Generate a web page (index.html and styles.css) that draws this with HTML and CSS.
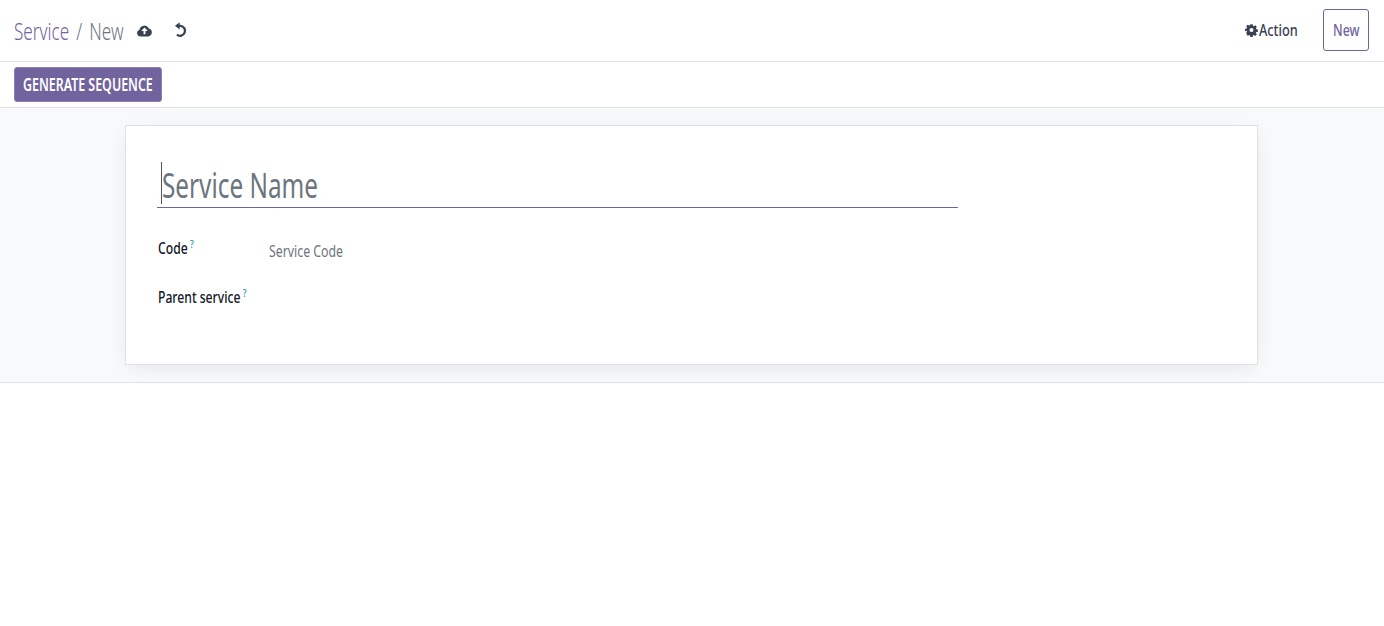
FILE: index.html
```html
<!DOCTYPE html>
<html lang="en">
<head>
<meta charset="utf-8">
<title>Service / New</title>
<link rel="stylesheet" href="styles.css">
</head>
<body>
<header class="control-panel">
  <div class="cp-left">
    <div class="breadcrumb"><span class="squeeze"><span class="crumb-link">Service</span> <span class="crumb-sep">/ New</span></span></div>
    <button class="icon-btn save" aria-label="Save">
      <svg viewBox="0 0 16 14" width="15" height="14"><path fill="#374151" fill-rule="evenodd" d="M3.800 13.800A3.700 3.700 0 0 1 2.600 6.600 5.300 5.300 0 0 1 12.600 5.400 4.300 4.300 0 0 1 12.200 13.800H3.800ZM8 4.200 4.400 8H7v3.400h2V8h2.600L8 4.200Z"/></svg>
    </button>
    <button class="icon-btn undo" aria-label="Discard">
      <svg viewBox="0 0 13 16" width="13" height="16"><path fill="none" stroke="#374151" stroke-width="2.300" d="M4.500 3.800H6.500a5 5 0 1 1-3.600 8.900"/><path fill="#374151" d="M1 3.800 5.600.2v7.200Z"/></svg>
    </button>
  </div>
  <div class="cp-right">
    <button class="action"><svg viewBox="-1 -1 18 18" width="13" height="14"><path fill="#374151" fill-rule="evenodd" d="M6.400 0h3.200l.4 2.200 1.300.6 1.900-1.300 2.200 2.200-1.300 1.900.6 1.300 2.200.4v3.200l-2.200.4-.6 1.300 1.300 1.900-2.200 2.200-1.900-1.300-1.300.6-.4 2.200H6.400l-.4-2.200-1.300-.6-1.900 1.300L.6 12.200l1.300-1.900-.6-1.300L-.9 9.600V6.400l2.200-.4.6-1.300L.6 2.800l2.200-2.200 1.900 1.300 1.300-.6L6.400 0ZM8 5.200a2.800 2.800 0 1 0 0 5.600 2.800 2.800 0 0 0 0-5.600Z"/></svg><span class="action-label"><span class="squeeze">Action</span></span></button>
    <button class="new-btn"><span class="squeeze">New</span></button>
  </div>
</header>
<div class="status-bar">
  <button class="primary-btn"><span class="squeeze">GENERATE SEQUENCE</span></button>
</div>
<main class="form-area">
  <section class="sheet">
    <div class="title-field"><span class="caret"></span><span class="squeeze title-placeholder">Service Name</span></div>
    <div class="field-grid">
      <div class="label"><span class="squeeze">Code<sup class="help">?</sup></span></div>
      <div class="value placeholder"><span class="squeeze">Service Code</span></div>
      <div class="label"><span class="squeeze">Parent service<sup class="help">?</sup></span></div>
      <div class="value"></div>
    </div>
  </section>
</main>
</body>
</html>
```

FILE: styles.css
```css
* { box-sizing: border-box; }
html, body { margin: 0; padding: 0; background: #fff; }
body { font-family: "Noto Sans", "Open Sans", sans-serif; color: #111827; height: 626px; overflow: hidden; }
button { font: inherit; background: none; border: 0; padding: 0; cursor: pointer; }

/* The reference text is horizontally condensed */
.squeeze { display: inline-block; white-space: nowrap; transform: scaleX(.77); transform-origin: left center; }

.control-panel { height: 62px; display: flex; justify-content: space-between; align-items: center; padding: 0 15px 2px 14px; border-bottom: 1px solid #dee2e6; }
.cp-left { display: flex; align-items: center; }
.cp-right { display: flex; align-items: center; }
.breadcrumb { font-size: 23px; width: 110px; color: #6c757d; line-height: 30px; margin-top: 2px; font-weight: 300; word-spacing: 3.5px; }
.breadcrumb .squeeze { transform: scaleX(.745); }
.crumb-link { color: #71639e; }
.crumb-sep { color: #6c757d; }
.icon-btn { display: flex; align-items: center; justify-content: center; }
.save { margin-left: 13px; }
.undo { margin-left: 22px; margin-top: 1px; }
.action { display: flex; align-items: center; gap: 1px; font-size: 17px; font-weight: 500; color: #374151; margin-right: 25px; }
.action svg { margin-left: 1px; }
.action-label { width: 39px; text-align: left; }
.action-label .squeeze { transform: scaleX(.75); }
.new-btn { width: 46px; height: 42px; border: 1px solid #71639e; border-radius: 3px; color: #71639e; font-size: 17px; font-weight: 500; padding-left: 9px; text-align: left; }
.new-btn .squeeze { transform: scaleX(.73); }

.status-bar { height: 46px; padding: 5px 14px 0; border-bottom: 1px solid #dee2e6; }
.primary-btn { display: block; width: 148px; height: 35px; background: #71639e; color: #fff; border: 1px solid #8d80b5; border-radius: 3px; font-size: 17px; font-weight: 600; padding-left: 8px; text-align: left; overflow: hidden; }
.primary-btn .squeeze { transform: scaleX(.73); }

.form-area { height: 275px; background: #f8f9fa; border-bottom: 1px solid #dee2e6; padding: 17px 126px 0 125px; }
.sheet { height: 240px; background: #fff; border: 1px solid #dee2e6; box-shadow: 0 5px 20px -5px rgba(0,0,0,.1); padding: 36px 31px 0; }
.title-field { width: 801px; height: 46px; border-bottom: 1px solid #71639e; display: flex; align-items: center; padding-left: 4px; }
.caret { flex: none; width: 1px; height: 42px; background: #555; margin-top: -3px; }
.title-placeholder { font-size: 35px; color: #6c757d; transform: scaleX(.695); line-height: 46px; }
.field-grid { display: grid; grid-template-columns: 112px 1fr; grid-auto-rows: 49px; margin-top: 29px; }
.label { font-size: 16px; font-weight: 500; color: #111827; white-space: nowrap; padding-left: 1px; margin-top: -1px; }
.label .squeeze { transform: scaleX(.76); }
.help { font-size: 11px; color: #1f8fa8; margin-left: 3px; font-weight: 500; }
.value { font-size: 16px; padding-top: 3px; }
.placeholder { color: #6c757d; }
```
